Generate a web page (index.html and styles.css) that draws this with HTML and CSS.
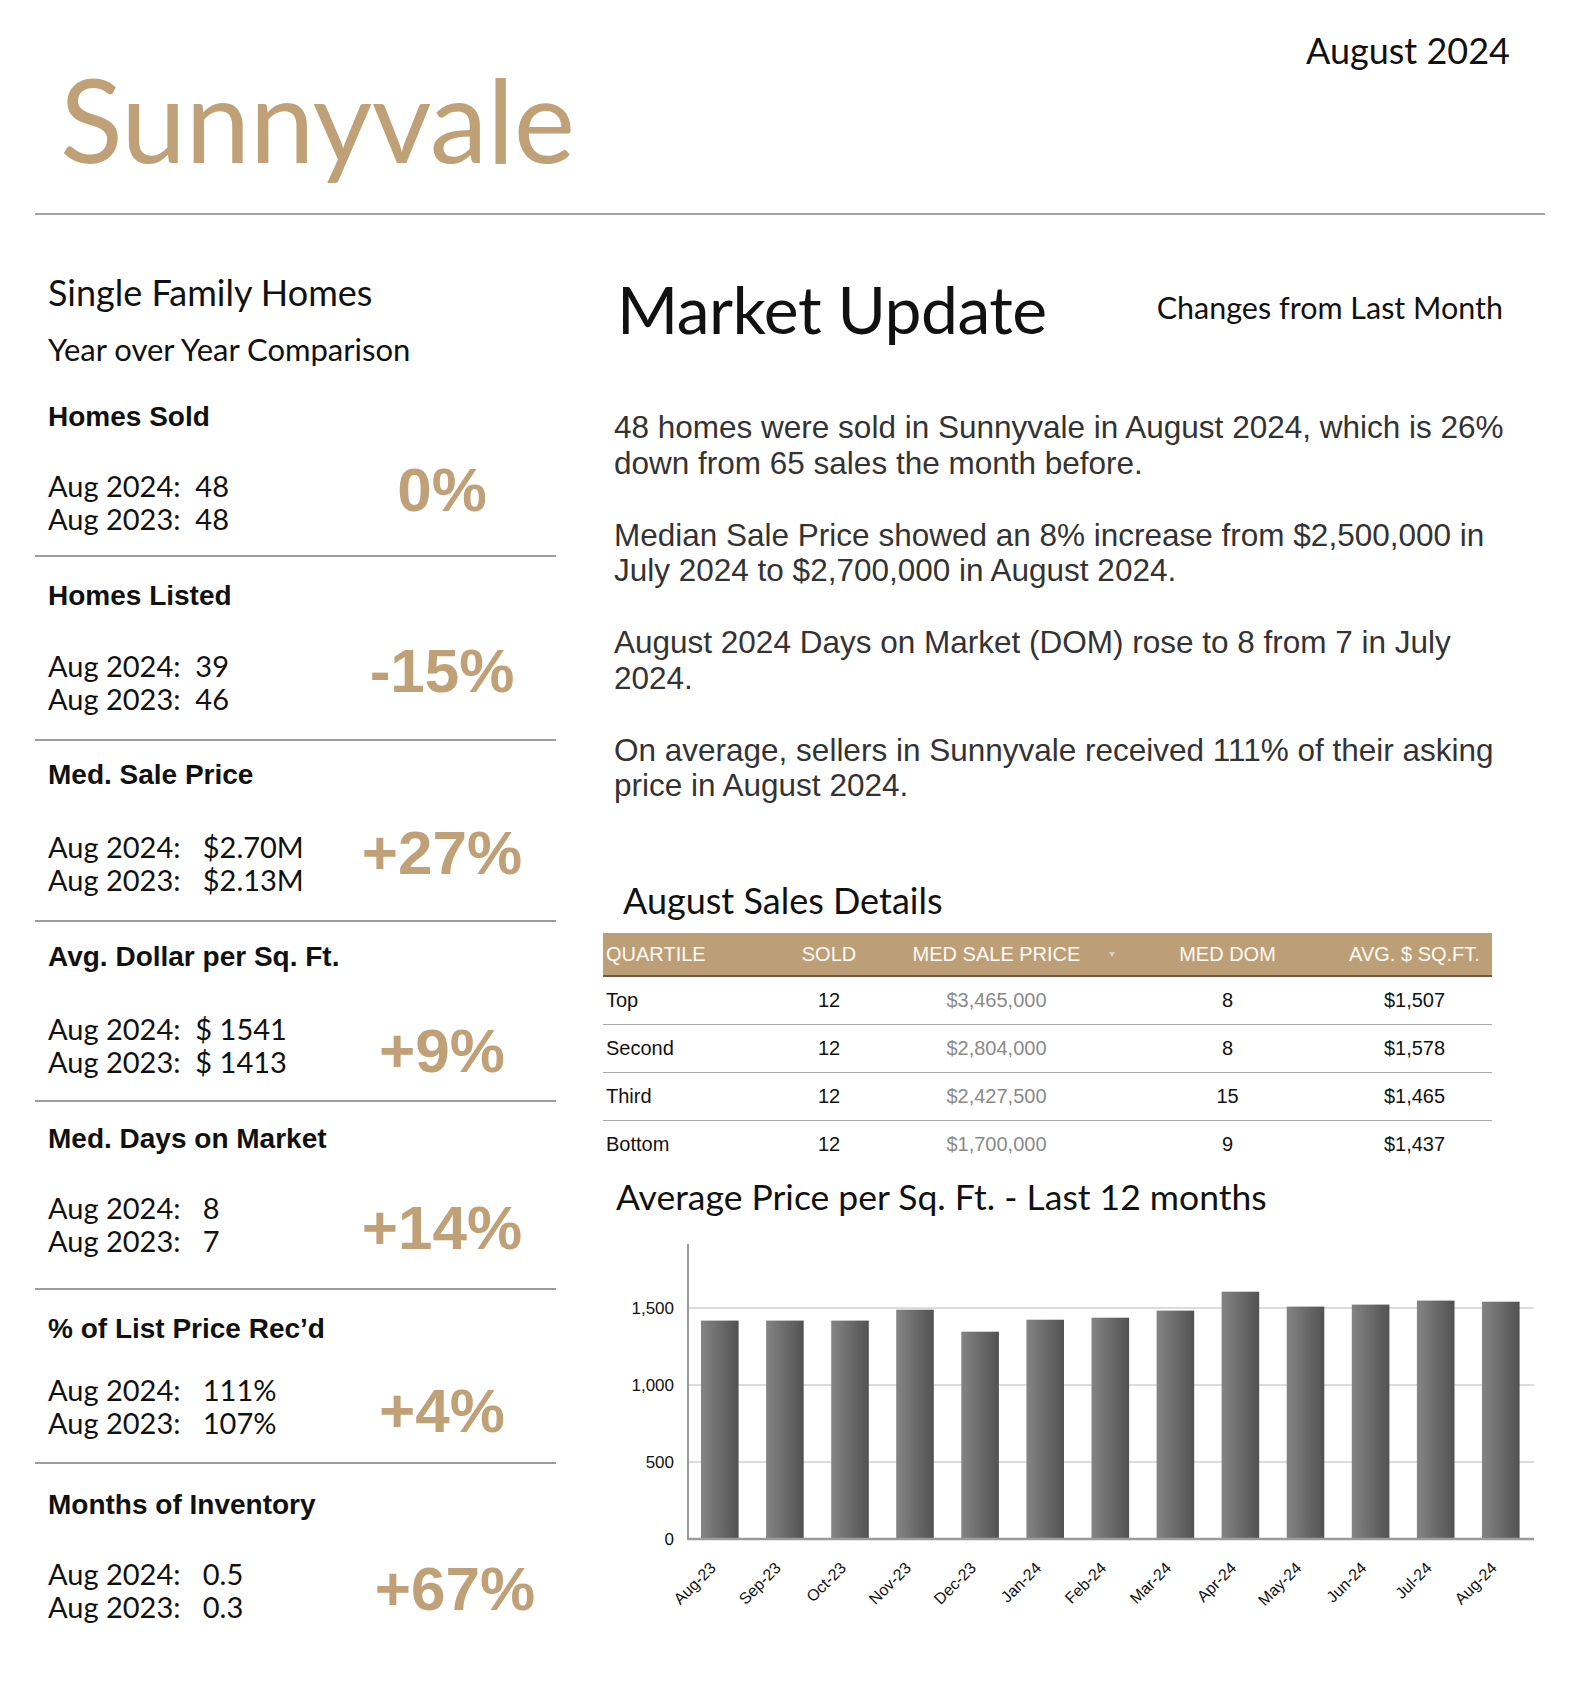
FILE: index.html
```html
<!DOCTYPE html>
<html lang="en">
<head>
<meta charset="utf-8">
<title>Sunnyvale Market Update – August 2024</title>
<link rel="stylesheet" href="styles.css">
</head>
<body>
<div class="page">
  <header class="top">
    <h1 class="title">Sunnyvale</h1>
    <div class="date">August 2024</div>
  </header>

  <main class="cols">
    <section class="left">
      <h2 class="sfh">Single Family Homes</h2>
      <div class="yoy">Year over Year Comparison</div>

      <div class="stat s1">
        <div class="stat-title">Homes Sold</div>
        <div class="stat-row">
          <div class="vals">Aug 2024:  48
Aug 2023:  48</div>
          <div class="pct">0%</div>
        </div>
      </div>

      <div class="stat s2">
        <div class="stat-title">Homes Listed</div>
        <div class="stat-row">
          <div class="vals">Aug 2024:  39
Aug 2023:  46</div>
          <div class="pct">-15%</div>
        </div>
      </div>

      <div class="stat s3">
        <div class="stat-title">Med. Sale Price</div>
        <div class="stat-row">
          <div class="vals">Aug 2024:   $2.70M
Aug 2023:   $2.13M</div>
          <div class="pct">+27%</div>
        </div>
      </div>

      <div class="stat s4">
        <div class="stat-title">Avg. Dollar per Sq. Ft.</div>
        <div class="stat-row">
          <div class="vals">Aug 2024:  $ 1541
Aug 2023:  $ 1413</div>
          <div class="pct">+9%</div>
        </div>
      </div>

      <div class="stat s5">
        <div class="stat-title">Med. Days on Market</div>
        <div class="stat-row">
          <div class="vals">Aug 2024:   8
Aug 2023:   7</div>
          <div class="pct">+14%</div>
        </div>
      </div>

      <div class="stat s6">
        <div class="stat-title">% of List Price Rec’d</div>
        <div class="stat-row">
          <div class="vals">Aug 2024:   111%
Aug 2023:   107%</div>
          <div class="pct">+4%</div>
        </div>
      </div>

      <div class="stat s7">
        <div class="stat-title">Months of Inventory</div>
        <div class="stat-row">
          <div class="vals">Aug 2024:   0.5
Aug 2023:   0.3</div>
          <div class="pct">+67%</div>
        </div>
      </div>
    </section>

    <section class="right">
      <div class="mu-row">
        <h2 class="mu">Market Update</h2>
        <div class="changes">Changes from Last Month</div>
      </div>

      <div class="paras">
        <p>48 homes were sold in Sunnyvale in August 2024, which is 26% down from 65 sales the month before.</p>
        <p>Median Sale Price showed an 8% increase from $2,500,000 in July 2024 to $2,700,000 in August 2024.</p>
        <p>August 2024 Days on Market (DOM) rose to 8 from 7 in July 2024.</p>
        <p>On average, sellers in Sunnyvale received 111% of their asking price in August 2024.</p>
      </div>

      <h3 class="asd">August Sales Details</h3>
      <table class="sales">
        <colgroup>
          <col class="c1"><col class="c2"><col class="c3"><col class="c4"><col class="c5">
        </colgroup>
        <thead>
          <tr>
            <th class="q">QUARTILE</th>
            <th>SOLD</th>
            <th class="sorted">MED SALE PRICE<span class="sort"></span></th>
            <th>MED DOM</th>
            <th>AVG. $ SQ.FT.</th>
          </tr>
        </thead>
        <tbody>
          <tr><td class="q">Top</td><td>12</td><td class="p">$3,465,000</td><td>8</td><td>$1,507</td></tr>
          <tr><td class="q">Second</td><td>12</td><td class="p">$2,804,000</td><td>8</td><td>$1,578</td></tr>
          <tr><td class="q">Third</td><td>12</td><td class="p">$2,427,500</td><td>15</td><td>$1,465</td></tr>
          <tr><td class="q">Bottom</td><td>12</td><td class="p">$1,700,000</td><td>9</td><td>$1,437</td></tr>
        </tbody>
      </table>

      <h3 class="cht">Average Price per Sq. Ft. - Last 12 months</h3>
      <svg class="chart" width="942" height="400" viewBox="0 0 942 400" xmlns="http://www.w3.org/2000/svg">
        <defs>
          <linearGradient id="barg" x1="0" y1="0" x2="1" y2="0">
            <stop offset="0" stop-color="#848484"/>
            <stop offset="1" stop-color="#525252"/>
          </linearGradient>
        </defs>
        <g stroke="#dcdcdc" stroke-width="2">
          <line x1="85" y1="84" x2="931" y2="84"/>
          <line x1="85" y1="161" x2="931" y2="161"/>
          <line x1="85" y1="238" x2="931" y2="238"/>
        </g>
        <g fill="url(#barg)">
          <rect x="98.0" y="96.6" width="37.6" height="218.4"/>
          <rect x="163.1" y="96.6" width="37.6" height="218.4"/>
          <rect x="228.2" y="96.6" width="37.6" height="218.4"/>
          <rect x="293.2" y="85.7" width="37.6" height="229.3"/>
          <rect x="358.3" y="107.7" width="37.6" height="207.3"/>
          <rect x="423.4" y="95.7" width="37.6" height="219.3"/>
          <rect x="488.5" y="93.7" width="37.6" height="221.3"/>
          <rect x="553.6" y="86.6" width="37.6" height="228.4"/>
          <rect x="618.6" y="67.7" width="37.6" height="247.3"/>
          <rect x="683.7" y="82.6" width="37.6" height="232.4"/>
          <rect x="748.8" y="80.6" width="37.6" height="234.4"/>
          <rect x="813.9" y="76.6" width="37.6" height="238.4"/>
          <rect x="879.0" y="77.7" width="37.6" height="237.3"/>
        </g>
        <line x1="85" y1="20" x2="85" y2="316" stroke="#9a9a9a" stroke-width="2"/>
        <line x1="84" y1="315" x2="931" y2="315" stroke="#9a9a9a" stroke-width="2.5"/>
        <g class="ylab" text-anchor="end">
          <text x="71" y="321">0</text>
          <text x="71" y="244">500</text>
          <text x="71" y="167">1,000</text>
          <text x="71" y="90">1,500</text>
        </g>
        <g class="xlab" text-anchor="end">
          <text x="113.8" y="345" transform="rotate(-45 113.8 345)">Aug-23</text>
          <text x="178.9" y="345" transform="rotate(-45 178.9 345)">Sep-23</text>
          <text x="244.0" y="345" transform="rotate(-45 244.0 345)">Oct-23</text>
          <text x="309.0" y="345" transform="rotate(-45 309.0 345)">Nov-23</text>
          <text x="374.1" y="345" transform="rotate(-45 374.1 345)">Dec-23</text>
          <text x="439.2" y="345" transform="rotate(-45 439.2 345)">Jan-24</text>
          <text x="504.3" y="345" transform="rotate(-45 504.3 345)">Feb-24</text>
          <text x="569.4" y="345" transform="rotate(-45 569.4 345)">Mar-24</text>
          <text x="634.4" y="345" transform="rotate(-45 634.4 345)">Apr-24</text>
          <text x="699.5" y="345" transform="rotate(-45 699.5 345)">May-24</text>
          <text x="764.6" y="345" transform="rotate(-45 764.6 345)">Jun-24</text>
          <text x="829.7" y="345" transform="rotate(-45 829.7 345)">Jul-24</text>
          <text x="894.8" y="345" transform="rotate(-45 894.8 345)">Aug-24</text>
        </g>
      </svg>
    </section>
  </main>
</div>
</body>
</html>
```

FILE: styles.css
```css
* { box-sizing: border-box; }

html, body {
  margin: 0;
  padding: 0;
  background: #ffffff;
}

body {
  font-family: Lato, "Liberation Sans", sans-serif;
  color: #111111;
}

h1, h2, h3, p { margin: 0; font-weight: normal; }

.page {
  width: 1580px;
  min-height: 1686px;
}

/* ---------- header ---------- */
.top {
  margin: 0 35px;
  padding: 30px 35px 36px 25px;
  display: flex;
  justify-content: space-between;
  align-items: flex-start;
  border-bottom: 2px solid #a3a3a3;
}

.title {
  margin-top: 31px;
  font-size: 116px;
  line-height: 116px;
  color: #bfa077;
  letter-spacing: -0.5px;
}

.date {
  font-size: 36px;
  line-height: 40px;
  color: #111111;
}

/* ---------- columns ---------- */
.cols {
  display: flex;
  padding-left: 35px;
}

.left {
  width: 521px;
  padding-top: 57px;
}

.right {
  width: 942px;
  margin-left: 47px;
  padding-top: 56px;
}

/* ---------- left column ---------- */
.sfh {
  margin-left: 13px;
  font-size: 36px;
  line-height: 40px;
}

.yoy {
  margin: 19px 0 0 13px;
  font-size: 31px;
  line-height: 36px;
}

.stat {
  --pt: 22px;
  --mt: 38px;
  --pb: 22px;
  --pm: -10px;
  --pl: 0px;
  padding: var(--pt) 0 var(--pb);
  border-bottom: 2px solid #9d9d9d;
}

.s1 { --pt: 34.2px; --mt: 35.8px; --pb: 19.7px; --pm: -10px; }
.s2 { --pt: 23.5px; --mt: 36.9px; --pb: 23.7px; --pm: -9.4px; }
.s3 { --pt: 18.6px; --mt: 39px; --pb: 23.6px; --pm: -8px; }
.s4 { --pt: 19.5px; --mt: 38.8px; --pb: 17.5px; --pm: 8px; }
.s5 { --pt: 21.5px; --mt: 36px; --pb: 28.2px; --pm: 6.2px; }
.s6 { --pt: 23.3px; --mt: 28px; --pb: 20.5px; --pm: 7px; }
.s7 { --pt: 24.3px; --mt: 36px; --pb: 0px; --pm: 1px; --pl: 26px; border-bottom: none; }

.stat-title {
  margin-left: 13px;
  font-family: "Liberation Sans", Arial, sans-serif;
  font-weight: bold;
  font-size: 28px;
  line-height: 32px;
}

.stat-row {
  display: flex;
  align-items: flex-start;
  margin-top: var(--mt);
}

.vals {
  width: 295px;
  padding-left: 13px;
  font-size: 29px;
  line-height: 33px;
  white-space: pre;
}

.pct {
  width: 224px;
  margin-top: var(--pm);
  padding-left: var(--pl);
  text-align: center;
  font-family: "Liberation Sans", Arial, sans-serif;
  font-weight: bold;
  font-size: 62px;
  line-height: 62px;
  color: #bfa077;
}

/* ---------- right column ---------- */
.mu-row {
  display: flex;
  justify-content: space-between;
  align-items: flex-start;
  padding-right: 42px;
}

.mu {
  margin-left: 14px;
  font-size: 66px;
  line-height: 76px;
  letter-spacing: -0.5px;
}

.changes {
  margin-top: 19px;
  font-size: 30.5px;
  line-height: 34px;
}

.paras {
  width: 900px;
  margin: 63px 0 0 11px;
  font-family: "Liberation Sans", Arial, sans-serif;
  font-size: 31.5px;
  line-height: 35.5px;
  color: #333333;
}

.paras p { margin-bottom: 36.5px; }
.paras p:last-child { margin-bottom: 0; }

.asd {
  margin: 76px 0 0 20px;
  font-size: 36px;
  line-height: 40px;
}

/* ---------- table ---------- */
.sales {
  width: 889px;
  margin-top: 13.5px;
  border-collapse: collapse;
  table-layout: fixed;
  font-family: "Liberation Sans", Arial, sans-serif;
}

.c1 { width: 180px; }
.c2 { width: 92px; }
.c3 { width: 243px; }
.c4 { width: 219px; }
.c5 { width: 155px; }

.sales th {
  height: 43px;
  padding: 0;
  background: #bd9f77;
  color: #fdfaf5;
  font-weight: normal;
  font-size: 20px;
  line-height: 40px;
  text-align: center;
  border-bottom: 2px solid #6e5a44;
}

.sales td {
  height: 48px;
  padding: 0;
  font-size: 20px;
  line-height: 24px;
  text-align: center;
  color: #111111;
  border-bottom: 1px solid #a8a8a8;
}

.sales tbody tr:last-child td { border-bottom: none; }

.sales .q {
  text-align: left;
  padding-left: 3px;
}

.sales td.p { color: #8a8a8a; }

.sales th.sorted { position: relative; }

.sort {
  position: absolute;
  right: 3px;
  top: 19px;
  width: 0;
  height: 0;
  border-left: 3px solid transparent;
  border-right: 3px solid transparent;
  border-top: 5px solid #d9d2c8;
}

/* ---------- chart ---------- */
.cht {
  margin: 8.5px 0 0 13px;
  font-size: 35.5px;
  line-height: 40px;
}

.chart {
  display: block;
  margin-top: 7px;
}

.ylab text {
  font-family: "Liberation Sans", Arial, sans-serif;
  font-size: 17px;
  fill: #111111;
}

.xlab text {
  font-family: "Liberation Sans", Arial, sans-serif;
  font-size: 16px;
  fill: #111111;
}
```
